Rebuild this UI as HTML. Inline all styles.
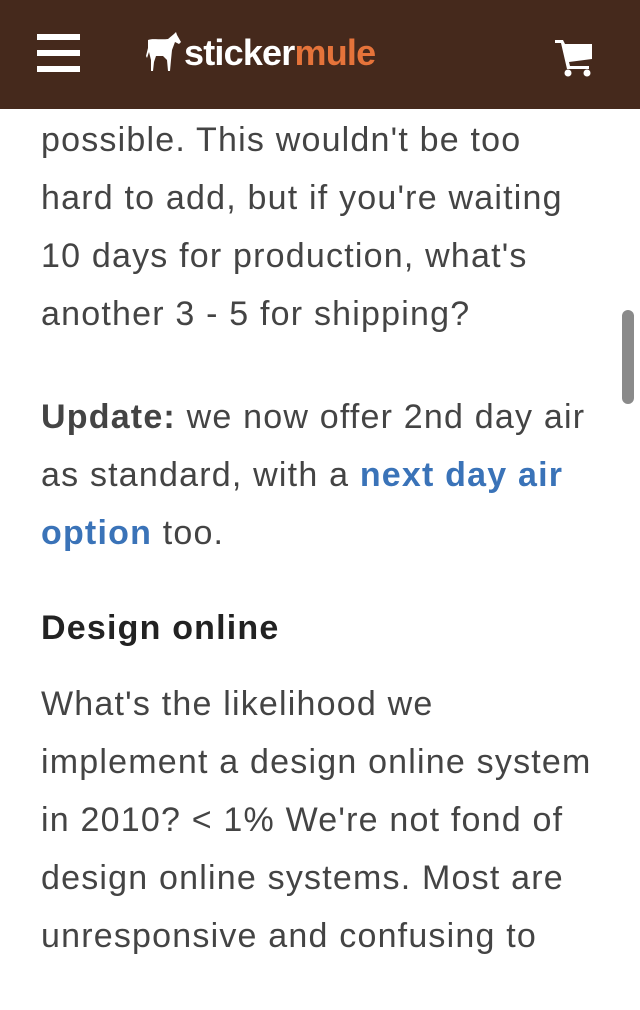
<!DOCTYPE html>
<html><head><meta charset="utf-8"><style>
html,body{margin:0;padding:0;background:#fff;width:640px;height:959px;overflow:hidden}
.hdr{position:absolute;left:0;top:0;width:640px;height:109px;background:#45291c}
.bar{position:absolute;left:37px;width:43px;height:6px;background:#fff}
.logo{position:absolute;left:184px;top:31px;font:bold 36px/44px "Liberation Sans",sans-serif;letter-spacing:-0.8px;color:#fff}
.logo span{color:#e5733a}
.content{position:absolute;left:41px;top:111px;width:580px;font:34px/58px "Liberation Sans",sans-serif;letter-spacing:1.2px;color:#444;white-space:nowrap}
p{margin:0 0 45px}
h2{margin:-8px 0 18px;font:bold 34px/58px "Liberation Sans",sans-serif;letter-spacing:1.2px;color:#222}
a{color:#3a73b8;font-weight:bold;text-decoration:none}
.sb{position:absolute;left:622px;top:310px;width:12px;height:94px;border-radius:6px;background:#8a8a8a}
</style></head><body>
<div class="hdr">
<div class="bar" style="top:34px"></div><div class="bar" style="top:50px"></div><div class="bar" style="top:66px"></div>
<svg style="position:absolute;left:146px;top:32px" width="36" height="40" viewBox="0 0 36 40"><path d="M2 8 C6 6 14 8 22 7 L28 2 L30 0 L31 3 L35 10 L33 12 L29 10 L26 18 L25 28 L24 39 L22 39 L21 28 L17 24 L10 24 L8 30 L7 39 L5 39 L5 28 L3 20 L1 26 L0 24 L2 16 Z" fill="#fff"/></svg>
<div class="logo">sticker<span>mule</span></div>
<svg style="position:absolute;left:555px;top:38px" width="38" height="40" viewBox="0 0 38 40"><path d="M0 2 H8 L10 6 H37 L37 21 L14 24 L15 28 H34 V31 H12 L6 5 H0 Z" fill="#fff"/><circle cx="13" cy="35" r="3.5" fill="#fff"/><circle cx="32" cy="35" r="3.5" fill="#fff"/></svg>
</div>
<div class="content">
<p>possible. This wouldn't be too<br>hard to add, but if you're waiting<br>10 days for production, what's<br>another 3 - 5 for shipping?</p>
<p><b>Update:</b> we now offer 2nd day air<br>as standard, with a <a>next day air<br>option</a> too.</p>
<h2>Design online</h2>
<p>What's the likelihood we<br>implement a design online system<br>in 2010? &lt; 1% We're not fond of<br>design online systems. Most are<br>unresponsive and confusing to</p>
</div>
<div class="sb"></div>
</body></html>
